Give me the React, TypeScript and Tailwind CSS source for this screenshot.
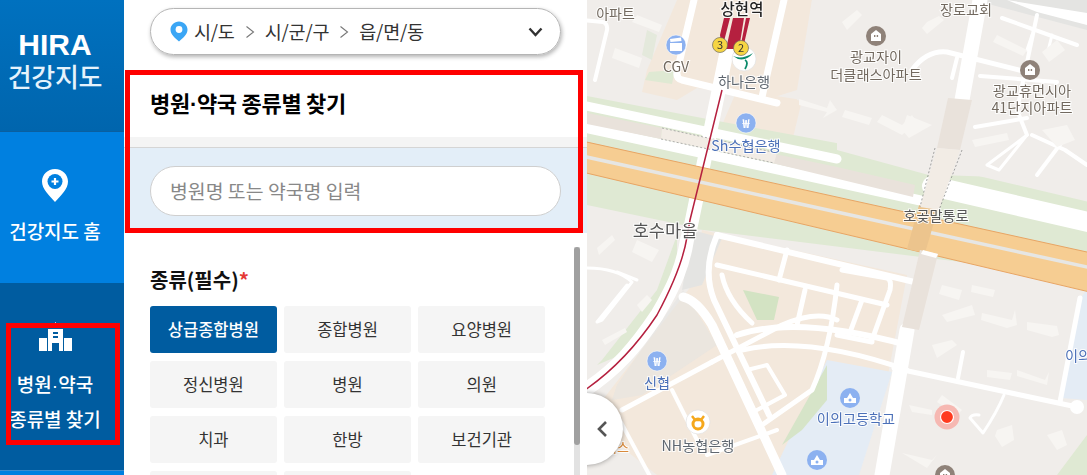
import React from "react";

const KR = "font-['Noto_Sans_CJK_KR',sans-serif]";

type L = { t: string; x: number; y: number; s?: number; c?: string; w?: number };
const labels: L[] = [
  { t: "아파트", x: 28.5, y: 19, s: 14 },
  { t: "상현역", x: 155, y: 15, s: 15.5, c: "#222", w: 500 },
  { t: "CGV", x: 89, y: 72, s: 14 },
  { t: "하나은행", x: 157, y: 87, s: 14.2, c: "#5f6770" },
  { t: "Sh수협은행", x: 159, y: 151, s: 14.2, c: "#4b70b8" },
  { t: "호수마을", x: 78, y: 237, s: 17.6, c: "#555" },
  { t: "장로교회", x: 379, y: 15, s: 14.2 },
  { t: "광교자이", x: 289, y: 62, s: 14.2 },
  { t: "더클래스아파트", x: 289, y: 80, s: 14.2 },
  { t: "광교휴먼시아", x: 445, y: 96, s: 14.2 },
  { t: "41단지아파트", x: 445, y: 113, s: 14.2 },
  { t: "호곶말통로", x: 349, y: 221, s: 14.2, c: "#555" },
  { t: "신협", x: 70, y: 388, s: 14.2, c: "#4b70b8" },
  { t: "NH농협은행", x: 111, y: 451, s: 14.2, c: "#5f6770" },
  { t: "럭스", x: 30, y: 452, s: 13, c: "#d98a3c" },
  { t: "이의고등학교", x: 269, y: 424, s: 14.2, c: "#4b70b8" },
  { t: "이의", x: 491, y: 361, s: 14.2, c: "#4b70b8" },
];

const whiteRoads: [string, number][] = [
  ["M-5 105 L250 159", 9],
  ["M-5 127 L345 203", 10],
  ["M345 186 L505 223", 20],
  ["M140 50 L104 225 L100 240 C96 265 88 285 70 315 C50 345 30 370 -5 392", 14],
  ["M107 0 L90 72 Q89 78 95 80 L190 103", 7],
  ["M197 0 L175 97", 7],
  ["M-5 20 L16 22 Q21 24 20 30 L8 80", 4],
  ["M393 0 L375 100", 15],
  ["M325 70 Q340 50 360 52 L440 72", 5],
  ["M370 58 L365 78", 4],
  ["M393 76 L470 82", 4],
  ["M450 15 L430 110 L440 135", 4],
  ["M415 18 L490 45", 4],
  ["M445 35 L440 50", 3],
  ["M465 35 L460 55", 3],
  ["M388 127 L440 118", 4],
  ["M440 135 L400 165 L412 170 L440 135", 3],
  ["M445 135 L478 150 L500 165", 4],
  ["M478 138 L450 175", 4],
  ["M320 330 L295 475", 15],
  ["M96 297 Q110 300 125 325 L195 475", 9],
  ["M35 410 L125 362", 5],
  ["M125 362 L195 325 Q230 310 250 320", 5],
  ["M307 368 L490 407", 5],
  ["M130 235 Q115 270 127 300 L175 400 L182 415", 6],
  ["M130 235 L340 285", 6],
  ["M130 265 L300 305", 5],
  ["M135 275 Q140 300 165 323", 5],
  ["M150 335 Q210 315 320 345", 6],
  ["M155 350 Q220 335 320 370", 5],
  ["M200 250 L192 280", 5],
  ["M218 290 L210 325", 5],
  ["M250 285 Q243 350 225 390 L175 425", 5],
  ["M160 370 L180 365 L198 395 L170 410", 4],
  ["M85 390 L115 450", 4],
  ["M30 415 L65 480", 4],
  ["M0 268 Q30 268 45 282 L15 320 L10 322 L40 285", 3],
  ["M30 272 L50 280", 3],
  ["M120 455 L190 430", 4],
  ["M493 298 L473 402", 5],
  ["M376 352 L371 378", 4],
  ["M417 395 Q410 412 396 433 L383 418 Q385 414 392 415", 3],
  ["M255 270 L300 278 Q305 280 303 290 L285 340", 5],
  ["M275 300 L262 335", 5],
  ["M250 335 L285 342", 5],
];

const blds: string[] = [
  "M50 15 L75 25 L72 32 L45 22Z",
  "M28 48 L55 58 L52 68 L25 58Z",
  "M212 105 L240 112 L236 118 L250 110 L243 100 L240 108 L212 99Z",
  "M255 22 L270 10 L275 15 L260 30Z",
  "M335 28 L340 22 L352 16 L357 20 L340 34Z",
  "M295 115 L315 125 L325 115 L330 122 L315 135 L290 122Z",
  "M258 110 L285 118 L282 125 L255 117Z",
  "M320 115 L345 125 L322 138 L315 130Z",
  "M410 35 L440 50 L436 56 L406 42Z",
  "M455 52 L470 40 L478 50 L462 62Z",
  "M385 140 L420 133 L422 140 L388 147Z",
  "M455 130 L480 125 L488 140 L470 147Z",
  "M355 285 L375 290 L372 300 L352 294Z",
  "M385 285 L408 290 L406 297 L384 292Z",
  "M355 315 L385 305 L388 315 L360 322Z",
  "M395 313 L425 320 L428 310 L430 325 L420 328 L394 320Z",
  "M440 322 L470 326 L472 335 L465 337 L440 330Z",
  "M345 345 L365 340 L370 345 L350 358Z",
  "M400 370 L425 373 L423 380 L400 377Z",
  "M430 370 L458 380 L462 372 L460 385 L430 376Z",
  "M322 405 L345 410 L345 415 L325 412Z",
  "M355 395 L375 410 L370 415 L350 402Z",
  "M410 430 L425 425 L427 440 L415 447 L408 436Z",
  "M460 435 L475 430 L480 445 L470 450Z",
  "M315 453 L345 460 L350 455 L340 468Z",
  "M12 255 L28 240 L25 235 L10 248Z",
  "M50 240 L72 250 L65 262 L45 252Z",
  "M15 340 L38 328 L40 332 L18 345Z",
  "M50 305 L60 295 L65 300 L55 312Z",
];

const peach: string[] = [
  "M60 70 L90 0 L200 0 L180 100 L110 88 L90 100 L55 92Z",
  "M197 0 L225 0 L210 90 L178 100Z",
  "M150 90 L215 100 L205 142 L135 125Z",
  "M250 290 L300 295 L290 350 L245 345Z",
];

const MapView = () => (
  <svg
    className="h-full w-full blur-[0.4px]"
    viewBox="0 0 500 475"
    style={{ fontFamily: "'Noto Sans CJK KR', sans-serif" }}
  >
    <rect width="500" height="475" fill="#f0edea" />
    {peach.map((d, i) => (
      <path key={i} d={d} fill="#f3e8dc" />
    ))}
    <path d="M-5 95 L115 118 L260 145 L600 225 L600 290 L-5 215Z" fill="#dfe9d3" />
    <path d="M0 205 L110 228 L95 280 L70 310 L15 365 L0 372Z" fill="#f0edea" />
    <path d="M90 235 L70 290 L15 360 L10 365 L45 350 L90 280Z" fill="#dfe9d3" />
    <path d="M360 265 L500 297 L500 405 L330 350Z" fill="#f0edea" />
    <path d="M330 385 L500 410 L500 475 L300 475Z" fill="#f0edea" />
    <path d="M470 475 L500 435 L500 475Z" fill="#dfe9d3" />
    <path d="M115 230 L320 275 L300 380 L240 370 L200 455 L190 475 L70 475 L0 420 L70 330 L105 285Z" fill="#f3e8dc" />
    <path d="M96 290 L30 385 L25 400 L55 395 L130 345Z" fill="#e4e4e2" opacity="0.55" />
    <path d="M105 230 L135 238 L115 285 L95 290Z" fill="#e4e4e2" />
    <path d="M240 360 L305 372 L272 475 L185 475Z" fill="#e4ecf5" />
    <path d="M240 365 L195 445 L215 430 L240 400Z" fill="#d6e4c8" />
    <path d="M156 290 L192 297 L187 320 L170 320Z" fill="#d3e3c3" />
    <path d="M492 300 L500 290 L500 400 L474 398Z" fill="#e4ecf5" />
    <path d="M483 100 L500 80 L500 145 L490 125Z" fill="#dfe9d3" />
    <path d="M498 105 L500 105 L500 120 L498 120Z" fill="#88b8e8" />
    <path d="M60 30 L70 35 L65 60 L55 55Z" fill="#e4e9dc" />
    <path d="M62 72 L88 70 L85 84 L58 80Z" fill="#dfe9d3" />
    <path d="M0 0 L60 0 L40 95 L0 90Z" fill="#f0edea" />
    <path d="M110 0 L135 0 L115 75 L95 75Z" fill="#f3e8dc" />
    <path d="M225 0 L290 0 L250 110 L210 100Z" fill="#f0edea" />
    <path d="M250 0 L395 0 L378 100 L360 180 L250 150Z" fill="#f0edea" />
    <path d="M405 0 L500 0 L500 180 L352 175 L385 100Z" fill="#f0edea" />
    <path d="M395 0 L500 0 L500 30 L405 5Z" fill="#e4e4e2" />
    <path d="M420 0 L500 13 L500 25 L450 12Z" fill="#fff" />
    {whiteRoads.map(([d, w], i) => (
      <path key={i} d={d} fill="none" stroke="#ffffff" strokeWidth={w} strokeLinecap="round" strokeLinejoin="round" />
    ))}
    <circle cx="490" cy="407" r="7" fill="#fff" />
    <path d="M-5 112 L75 128 L74 139 L-5 123Z" fill="#e9e2db" />
    <path d="M188 154 L250 167 L328 185 L326 197 L185 163Z" fill="#e9e2db" />
    <path d="M75 128 L190 153 L187 163 L74 139Z" fill="#f2ece5" />
    <path d="M75 128 L190 153 M74 139 L187 163" stroke="#9d9d9d" strokeWidth="0.8" strokeDasharray="2 2" fill="none" />
    <path d="M-5 141 L600 274 L600 315 L-5 172Z" fill="#f6cd92" stroke="#e8a564" strokeWidth="1" />
    <path d="M-5 156 L600 289" stroke="#e6e6e4" strokeWidth="3.5" />
    <path d="M332 205 L351 209 L338 253 L320 249Z" fill="#ecc48d" />
    <path d="M361 98 L385 100 L373 150 L350 148Z" fill="#e9e2db" />
    <path d="M350 148 L373 150 L352 210 L333 207Z" fill="#f2ece5" />
    <path d="M348 148 L333 207 M375 150 L352 210" stroke="#8d8d8d" strokeWidth="0.8" strokeDasharray="2 2" fill="none" />
    <path d="M333 250 L351 254 L332 330 L315 327Z" fill="#e9e2db" />
    <path d="M336 250 L351 254 L349 258 L334 254Z" fill="#ffffff" />
    {blds.map((d, i) => (
      <path key={i} d={d} fill="#f7f5f2" />
    ))}
    <path d="M135 90 L103 220 L100 237 C96 262 85 287 70 315 C50 345 25 372 -5 392" fill="none" stroke="#b5203f" strokeWidth="1.5" />
    <path d="M137 18 L143 18 L135 49 L133 35Z M146 18 L157 18 L152 49 L139 49Z M159 18 L163 18 L157 44 L154 44Z" fill="#b5203f" />
    <circle cx="89" cy="45" r="10" fill="#8cb1f0" stroke="#fff" strokeWidth="0.5" />
    <path d="M83 43 H95 V51 H83Z M83 39 L94 37.5 L94.5 41 L83.5 42Z" fill="#fff" />
    <circle cx="157" cy="59" r="12" fill="#fff" stroke="#ddd" strokeWidth="0.6" />
    <path d="M146 56 Q155 60 166 53 Q160 61 151 59Z" fill="#0a8a6a" />
    <path d="M158 60 Q162 62 158 69" fill="none" stroke="#0a8a6a" strokeWidth="1.8" />
    <circle cx="133" cy="45" r="7.5" fill="#f6d544" stroke="#6d6c60" strokeWidth="0.7" />
    <circle cx="154" cy="48" r="7.5" fill="#f6d544" stroke="#6d6c60" strokeWidth="0.7" />
    <text x="133" y="49" textAnchor="middle" fontSize="11" fill="#333">3</text>
    <text x="154" y="52" textAnchor="middle" fontSize="11" fill="#333">2</text>
    {[
      [159, 123],
      [70, 361],
    ].map(([x, y]) => (
      <g key={x}>
        <circle cx={x} cy={y} r="10" fill="#8cb1f0" stroke="#fff" strokeWidth="0.5" />
        <text x={x} y={y + 4.5} textAnchor="middle" fontSize="12" fontWeight="700" fill="#fff">₩</text>
      </g>
    ))}
    <circle cx="111" cy="422" r="12" fill="#fff" stroke="#ddd" strokeWidth="0.6" />
    <circle cx="111" cy="424" r="5" fill="none" stroke="#f5a81c" strokeWidth="3" />
    <path d="M105 416 L108 420 L114 420 L117 416" fill="none" stroke="#f5a81c" strokeWidth="2.4" />
    {[
      [289, 36],
      [443, 70],
      [358, 475],
    ].map(([x, y]) => (
      <g key={x}>
        <circle cx={x} cy={y} r="10" fill="#8f8279" />
        <path d={`M${x - 5} ${y + 5} V${y - 2} L${x} ${y - 6} L${x + 5} ${y - 2} V${y + 5}Z`} fill="#fff" />
        <rect x={x - 2} y={y - 1} width="1.4" height="2" fill="#8f8279" />
        <rect x={x + 0.7} y={y - 1} width="1.4" height="2" fill="#8f8279" />
      </g>
    ))}
    {[
      [263, 398],
      [230, 460],
    ].map(([x, y]) => (
      <g key={x}>
        <circle cx={x} cy={y} r="10" fill="#8cb1f0" />
        <path d={`M${x - 6} ${y + 5} V${y} H${x - 3} L${x} ${y - 5} L${x + 3} ${y} H${x + 6} V${y + 5}Z`} fill="#fff" />
        <circle cx={x} cy={y + 2} r="1.5" fill="#8cb1f0" />
      </g>
    ))}
    <circle cx="360" cy="417" r="12.5" fill="#f6b8b2" />
    <circle cx="360" cy="417" r="6.5" fill="#ff3b20" stroke="#fff" strokeWidth="1.2" />
    {labels.map((l) => (
      <text
        key={l.t}
        x={l.x}
        y={l.y}
        fontSize={l.s ?? 13}
        fontWeight={l.w ?? 400}
        textAnchor="middle"
        fill={l.c ?? "#72695f"}
        stroke="#ffffff"
        strokeWidth="2"
        strokeOpacity="0.85"
        paintOrder="stroke"
      >
        {l.t}
      </text>
    ))}
  </svg>
);

const kinds = ["상급종합병원", "종합병원", "요양병원", "정신병원", "병원", "의원", "치과", "한방", "보건기관", "", ""];

const Dot = () => <span className="font-['Liberation_Sans',sans-serif]">·</span>;

export default function App() {
  return (
    <div className={`relative flex h-[475px] w-[1087px] overflow-hidden bg-white ${KR}`}>
      {/* sidebar */}
      <aside className="flex w-[124px] shrink-0 flex-col text-white">
        <div className="flex h-[132px] flex-col items-center border-b border-[#0b5f9f] bg-gradient-to-b from-[#0071bf] to-[#0065ad] pt-[30px] pr-[14px]">
          <span className="font-['Liberation_Sans',sans-serif] text-[30px] leading-[30px] font-bold">HIRA</span>
          <span className="mt-[1px] text-[26px] leading-[30px] font-medium tracking-[-0.3px] text-[#e6f3fc]">건강지도</span>
        </div>
        <div className="flex h-[151px] flex-col items-center bg-[#0080e0] pt-[36px] pr-[14px]">
          <svg width="28" height="35" viewBox="0 0 28 35">
            <path d="M14 1C6.5 1 1 6.7 1 13.5 1 21 8 27 14 34c6-7 13-13 13-20.5C27 6.7 21.5 1 14 1Z" fill="#fff" />
            <circle cx="14" cy="13.5" r="7.5" fill="#0080e0" />
            <path d="M10.5 13.5h7M14 10v7" stroke="#fff" strokeWidth="2.2" />
          </svg>
          <span className="mt-[15px] text-[19px] leading-[26px] font-medium">건강지도 홈</span>
        </div>
        <div className="flex h-[187px] flex-col items-center bg-[#005ca0] pt-[39px] pr-[14px]">
          <svg width="33" height="30" viewBox="0 0 33 30">
            <path d="M16 0h1v5h-1z" fill="#fff" opacity="0.7" />
            <path d="M0 16h9v13H0zM24 16h9v13h-9z" fill="#fff" />
            <path d="M8 7h17v22H8z" fill="#005ca0" />
            <path d="M9 7h15v22h-4v-8h-7v8H9z" fill="#fff" />
            <path d="M14 10h5v2h-5zM14 14h5v2h-5z" fill="#005ca0" />
          </svg>
          <span className="mt-[15px] text-[19px] leading-[33px] font-medium">
            병원<Dot />약국
          </span>
          <span className="text-[19px] leading-[33px] font-medium">종류별 찾기</span>
        </div>
        <div className="h-[5px] border-t border-[#3c8ccd] bg-[#0080e0]" />
      </aside>

      {/* panel */}
      <main className="relative w-[463px] shrink-0 bg-white">
        <div className="px-[26px] pt-[8px]">
          <div className="flex h-[47px] w-[411px] items-center rounded-full border border-[#b5b5b5] pr-[17px] pl-[19px] text-[18.5px] tracking-[-0.2px] text-[#333] shadow-[1px_2px_4px_rgba(0,0,0,0.3)]">
            <svg width="18" height="21" viewBox="0 0 18 21">
              <path d="M9 0.5C4.2 0.5 0.5 4.2 0.5 8.8c0 5 5 8.5 8.5 11.7 3.5-3.2 8.5-6.7 8.5-11.7C17.5 4.2 13.8 0.5 9 0.5Z" fill="#3ba6f5" />
              <circle cx="9" cy="8.5" r="3.4" fill="#fff" />
            </svg>
            <span className="ml-[6px]">시/도</span>
            <ChevronSmall className="mx-[10px]" />
            <span>시/군/구</span>
            <ChevronSmall className="mx-[10px]" />
            <span>읍/면/동</span>
            <svg className="ml-auto" width="15" height="10" viewBox="0 0 15 10">
              <path d="M1.5 1.5 7.5 8l6-6.5" fill="none" stroke="#333" strokeWidth="2.4" />
            </svg>
          </div>
        </div>
        <div className="mt-[15px] flex h-[67px] items-center pb-[1px] pl-[26px] text-[22px] tracking-[-0.3px] font-bold text-black">
          <span>병원<Dot />약국 종류별 찾기</span>
        </div>
        <div className="h-[11px] border-b border-[#d5d5d5] bg-[#f4f4f4]" />
        <div className="h-[85px] bg-[#e3eef8] px-[26px] pt-[18px]">
          <div className="flex h-[50px] w-[411px] items-center rounded-full border border-[#cfcfcf] bg-white pl-[19px] text-[19.4px] text-[#888]">
            병원명 또는 약국명 입력
          </div>
        </div>
        <div className="relative h-[242px] overflow-hidden bg-white pt-[33px] pl-[26px]">
          <div className="text-[20px] leading-[27px] font-bold text-[#111]">
            종류(필수)<span className="text-[#e53935]">*</span>
          </div>
          <div className="mt-[13px] grid w-[395px] grid-cols-3 gap-x-[7.5px] gap-y-[8px]">
            {kinds.map((k, i) =>
              i === 10 ? (
                <div key={i} className="h-[47px] rounded-[3px] bg-[#f5f5f5]" />
              ) : (
                <div
                  key={i}
                  className={
                    i === 0
                      ? "flex h-[47px] items-center justify-center rounded-[3px] bg-[#005ca0] text-[16.5px] font-medium text-white"
                      : "flex h-[47px] items-center justify-center rounded-[3px] bg-[#f5f5f5] text-[16.5px] text-[#333]"
                  }
                >
                  {k}
                </div>
              )
            )}
          </div>
          <div className="absolute top-[14px] right-[7px] bottom-0 w-[6px] bg-[#e2e2e2]">
            <div className="h-[198px] rounded-[3px] bg-[#a0a0a0]" />
          </div>
        </div>
        <div className="pointer-events-none absolute top-[70px] left-[1px] h-[163px] w-[458px] border-[5px] border-[#ff0000]" />
      </main>

      {/* map */}
      <section className="relative flex-1 overflow-hidden shadow-[inset_4px_0_4px_-3px_rgba(0,0,0,0.25)]">
        <MapView />
        <div className="absolute top-[393px] -left-[36px] flex h-[72px] w-[72px] items-center justify-end rounded-full bg-white pr-[15px] shadow-[0_0_5px_rgba(0,0,0,0.4)]">
          <svg width="12" height="18" viewBox="0 0 12 18">
            <path d="M10 2 3 9l7 7" fill="none" stroke="#555" strokeWidth="2.6" />
          </svg>
        </div>
      </section>

      <div className="pointer-events-none absolute top-[323px] left-[6px] h-[122px] w-[114px] border-[5px] border-[#ff0000]" />
    </div>
  );
}

function ChevronSmall({ className }: { className?: string }) {
  return (
    <svg className={className} width="10" height="14" viewBox="0 0 10 14">
      <path d="M1.5 1.5 8.5 7l-7 5.5" fill="none" stroke="#777" strokeWidth="1.1" />
    </svg>
  );
}
